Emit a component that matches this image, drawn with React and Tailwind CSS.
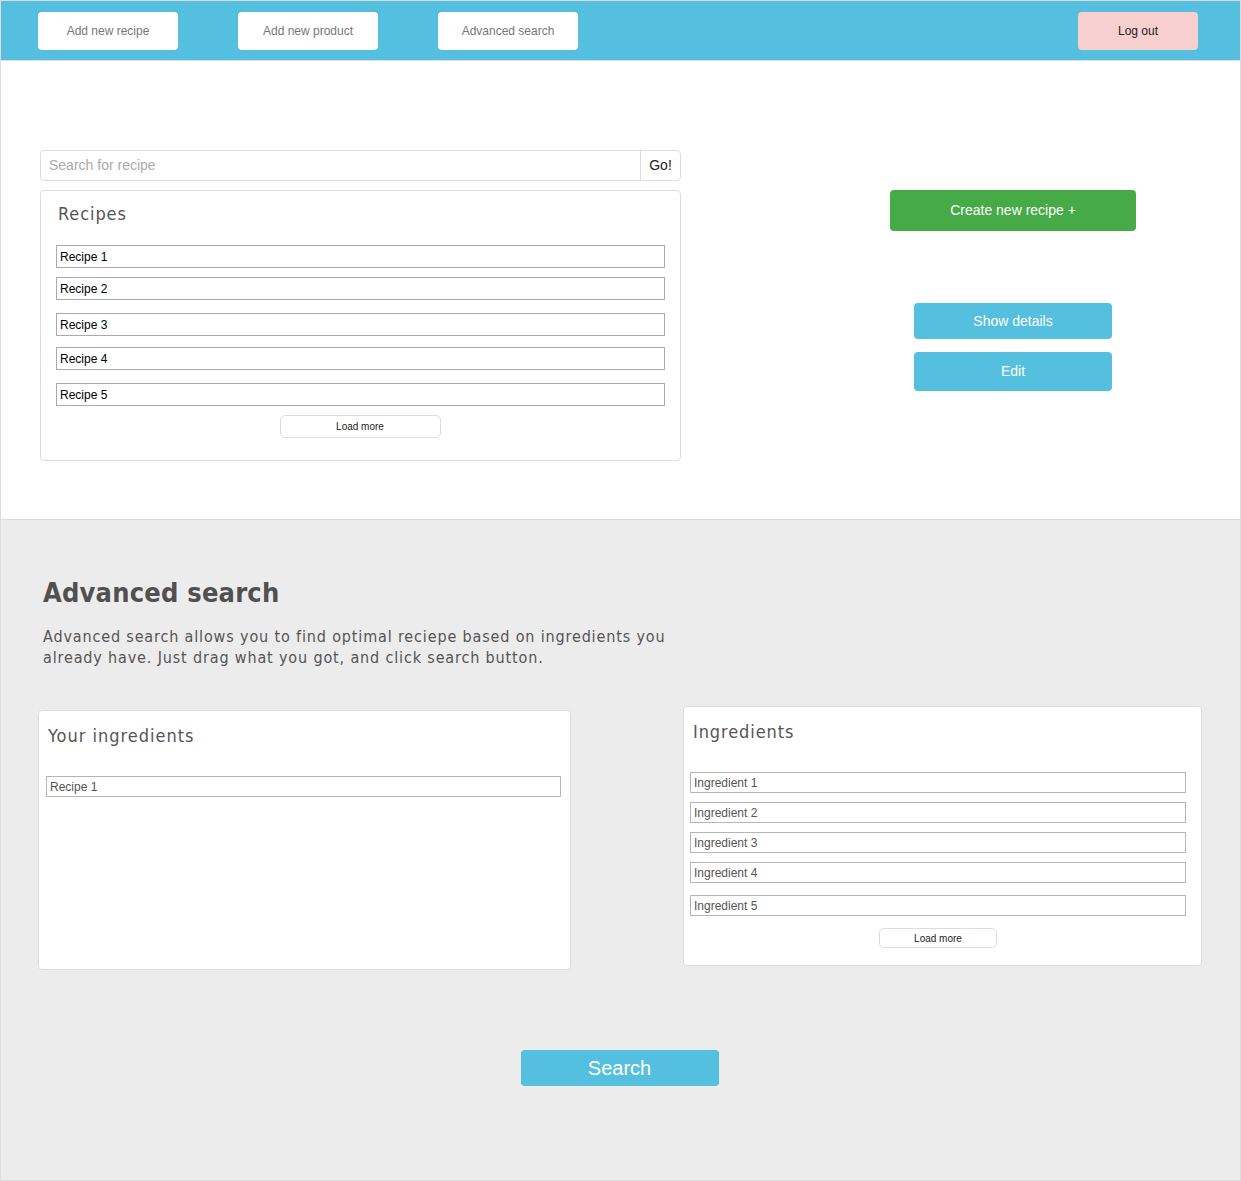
const sans = "font-['Liberation_Sans',Arial,sans-serif]";
const tah = "font-['DejaVu_Sans_Condensed','DejaVu_Sans',sans-serif]";

function Row({ children, className = "" }) {
  return (
    <div className={`border border-[#aaaaaa] h-[23px] pl-[3px] flex items-center text-[12px] text-black ${sans} ${className}`}>
      {children}
    </div>
  );
}

function IRow({ children, className = "" }) {
  return (
    <div className={`border border-[#b5b5b5] h-[21px] pl-[3px] flex items-center text-[12px] text-[#555] ${sans} ${className}`}>
      {children}
    </div>
  );
}

export default function App() {
  return (
    <div className="w-[1241px] h-[1181px] border border-[#dcdcdc] bg-white flex flex-col">
      {/* header */}
      <div className="h-[60px] bg-[#55bfe0] border-b border-[#dcdcdc] flex items-center pl-[37px] pr-[42px]">
        <button className={`w-[140px] h-[38px] bg-white rounded-[4px] text-[12px] text-[#777] ${sans}`}>Add new recipe</button>
        <button className={`ml-[60px] w-[140px] h-[38px] bg-white rounded-[4px] text-[12px] text-[#777] ${sans}`}>Add new product</button>
        <button className={`ml-[60px] w-[140px] h-[38px] bg-white rounded-[4px] text-[12px] text-[#777] ${sans}`}>Advanced search</button>
        <button className={`ml-auto w-[120px] h-[38px] bg-[#f7cfcf] rounded-[4px] text-[12px] text-[#222] ${sans}`}>Log out</button>
      </div>

      {/* top section */}
      <div className="h-[458px] flex pl-[39px] pt-[89px]">
        <div className="w-[641px] flex flex-col">
          <div className="h-[31px] border border-[#dddddd] rounded-[4px] flex">
            <div className={`flex-1 flex items-center pl-[8px] text-[14px] text-[#aaaaaa] ${sans}`}>Search for recipe</div>
            <div className={`w-[40px] border-l border-[#dddddd] flex items-center justify-center text-[14px] text-[#222] ${sans}`}>Go!</div>
          </div>
          <div className="mt-[9px] h-[271px] border border-[#dddddd] rounded-[4px] px-[15px] pt-[12px]">
            <div className={`text-[18px] text-[#555] leading-[22px] pl-[2px] tracking-[0.9px] ${tah}`}>Recipes</div>
            <Row className="mt-[20px]">Recipe 1</Row>
            <Row className="mt-[9px]">Recipe 2</Row>
            <Row className="mt-[13px]">Recipe 3</Row>
            <Row className="mt-[11px]">Recipe 4</Row>
            <Row className="mt-[13px]">Recipe 5</Row>
            <div className="flex justify-center mt-[9px]">
              <button className={`w-[161px] h-[23px] border border-[#dddddd] rounded-[5px] text-[10px] text-[#222] ml-[-1px] ${sans}`}>Load more</button>
            </div>
          </div>
        </div>
        <div className="flex flex-col pt-[40px]">
          <button className={`ml-[209px] w-[246px] h-[41px] bg-[#46aa46] rounded-[4px] text-[14px] text-white ${sans}`}>Create new recipe +</button>
          <button className={`ml-[233px] mt-[72px] w-[198px] h-[36px] bg-[#55bfe0] rounded-[4px] text-[14px] text-white ${sans}`}>Show details</button>
          <button className={`ml-[233px] mt-[13px] w-[198px] h-[39px] bg-[#55bfe0] rounded-[4px] text-[14px] text-white ${sans}`}>Edit</button>
        </div>
      </div>

      {/* advanced search section */}
      <div className="flex-1 bg-[#ececec] border-t border-[#dcdcdc] flex flex-col pt-[57px]">
        <h2 className={`pl-[42px] text-[27px] font-bold text-[#505050] leading-[32px] tracking-[0.2px] ${tah}`}>Advanced search</h2>
        <p className={`pl-[42px] mt-[17px] text-[16px] leading-[21px] text-[#555] w-[680px] tracking-[0.85px] ${tah}`}>
          Advanced search allows you to find optimal reciepe based on ingredients you already have. Just drag what you got, and click search button.
        </p>
        <div className="flex items-start mt-[38px] pl-[37px]">
          <div className="mt-[4px] w-[533px] h-[260px] bg-white border border-[#dddddd] rounded-[4px] px-[7px] pt-[14px]">
            <div className={`pl-[2px] text-[18px] text-[#555] leading-[22px] tracking-[1px] ${tah}`}>Your ingredients</div>
            <IRow className="mt-[29px] mr-[2px]">Recipe 1</IRow>
          </div>
          <div className="ml-[112px] w-[519px] h-[260px] bg-white border border-[#dddddd] rounded-[4px] pl-[6px] pr-[15px] pt-[14px]">
            <div className={`pl-[3px] text-[18px] text-[#555] leading-[22px] tracking-[0.9px] ${tah}`}>Ingredients</div>
            <IRow className="mt-[29px]">Ingredient 1</IRow>
            <IRow className="mt-[9px]">Ingredient 2</IRow>
            <IRow className="mt-[9px]">Ingredient 3</IRow>
            <IRow className="mt-[9px]">Ingredient 4</IRow>
            <IRow className="mt-[12px]">Ingredient 5</IRow>
            <div className="flex justify-center mt-[12px]">
              <button className={`w-[118px] h-[20px] bg-white border border-[#dddddd] rounded-[5px] text-[10px] text-[#222] ${sans}`}>Load more</button>
            </div>
          </div>
        </div>
        <div className="flex justify-center mt-[80px] pr-[2px]">
          <button className={`w-[198px] h-[36px] bg-[#55bfe0] rounded-[4px] text-[20px] text-white ${sans}`}>Search</button>
        </div>
      </div>
    </div>
  );
}
